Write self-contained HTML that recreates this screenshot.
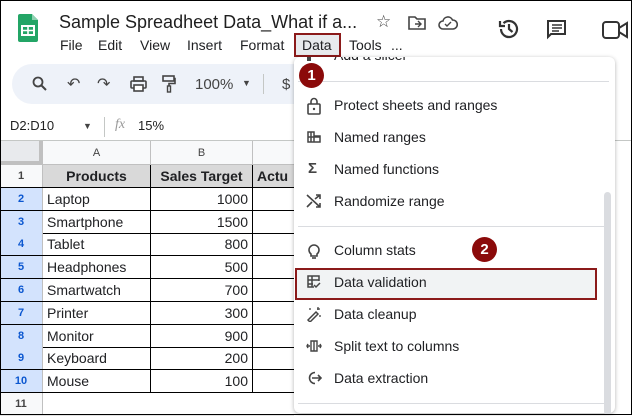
<!DOCTYPE html><html><head><style>
*{margin:0;padding:0;box-sizing:border-box}
body{width:632px;height:415px;overflow:hidden;background:#fff;font-family:"Liberation Sans",sans-serif;position:relative;color:#202124}
.a{position:absolute}
.frame{position:absolute;left:0;top:0;width:632px;height:415px;border:1px solid #000;pointer-events:none;z-index:50}
.row{position:absolute;left:0;width:294px;height:23px;border-bottom:1px solid #e2e2e2}
.rh{position:absolute;left:0;width:43px;height:100%;text-align:center;font-size:11px;font-weight:bold;line-height:22px;color:#444;background:#f8f9fa;border-right:1px solid #c0c0c0}
.c{position:absolute;height:100%;font-size:14px;line-height:22px;padding:0 4px}
.mi{position:absolute;left:294px;width:321px;height:32px;font-size:14px;line-height:32px;color:#202124}
.mi .t{position:absolute;left:40px}
.mi svg{position:absolute;left:12px;top:8px}
.badge{position:absolute;width:25px;height:25px;border-radius:50%;background:#8b0a0a;color:#fff;font-size:15px;font-weight:bold;text-align:center;line-height:25px}
</style></head><body>
<div class="frame"></div>
<svg class="a" style="left:18px;top:14px" width="20" height="28" viewBox="0 0 20 28"><path d="M0 2a2 2 0 0 1 2-2h12l6 6v20a2 2 0 0 1-2 2H2a2 2 0 0 1-2-2z" fill="#23a566"/><path d="M14 0l6 6h-6z" fill="#8ed1b1"/><rect x="4" y="12" width="12" height="9" fill="none" stroke="#fff" stroke-width="2"/><path d="M4 16.5h12M10 12v9" stroke="#fff" stroke-width="1.6"/></svg>
<div class="a" style="left:59px;top:12px;font-size:18px;color:#1f1f1f">Sample Spreadheet Data_What if a...</div>
<div class="a" style="left:376px;top:12px;font-size:17px;color:#444">☆</div>
<svg class="a" style="left:408px;top:16px" width="18" height="14" viewBox="0 0 18 14"><path d="M1 1h6l2 2h8v10H1z" fill="none" stroke="#444" stroke-width="1.6"/><path d="M7 8h6M10 5l3 3-3 3" fill="none" stroke="#444" stroke-width="1.4"/></svg>
<svg class="a" style="left:438px;top:16px" width="20" height="14" viewBox="0 0 20 14"><path d="M5 13a4 4 0 0 1 0-8 5 5 0 0 1 9.5-1A4.5 4.5 0 0 1 15 13z" fill="none" stroke="#444" stroke-width="1.6"/><path d="M7 8l2 2 4-4" fill="none" stroke="#444" stroke-width="1.4"/></svg>
<svg class="a" style="left:497px;top:17px" width="24" height="24" viewBox="0 0 24 24"><path d="M4 12a8 8 0 1 0 2.5-5.8" fill="none" stroke="#333" stroke-width="2.2"/><path d="M3 4v5h5" fill="none" stroke="#333" stroke-width="2.2"/><path d="M12 7v5l3.5 3" fill="none" stroke="#333" stroke-width="2.2"/></svg>
<svg class="a" style="left:546px;top:19px" width="22" height="22" viewBox="0 0 22 22"><path d="M2 2h17v13H5l-3 3z" fill="none" stroke="#333" stroke-width="2"/><path d="M6 6h10M6 9h10M6 12h7" stroke="#333" stroke-width="1.6"/></svg>
<svg class="a" style="left:602px;top:20px" width="30" height="20" viewBox="0 0 30 20"><rect x="1" y="2" width="16" height="16" rx="3" fill="none" stroke="#333" stroke-width="2"/><path d="M17 8l8-5v14l-8-5" fill="none" stroke="#333" stroke-width="2"/></svg>
<div class="a" style="left:60px;top:37px;font-size:14px;color:#1f1f1f">File</div>
<div class="a" style="left:98px;top:37px;font-size:14px">Edit</div>
<div class="a" style="left:140px;top:37px;font-size:14px">View</div>
<div class="a" style="left:187px;top:37px;font-size:14px">Insert</div>
<div class="a" style="left:240px;top:37px;font-size:14px">Format</div>
<div class="a" style="left:294px;top:33px;width:47px;height:24px;background:#e8eaed;border:2px solid #8b1a1a"></div>
<div class="a" style="left:302px;top:37px;font-size:14px">Data</div>
<div class="a" style="left:349px;top:37px;font-size:14px">Tools</div>
<div class="a" style="left:391px;top:37px;font-size:14px">...</div>
<div class="a" style="left:12px;top:64px;width:600px;height:40px;border-radius:20px;background:#eef2f9"></div>
<svg class="a" style="left:32px;top:76px" width="16" height="16" viewBox="0 0 16 16"><circle cx="6" cy="6" r="4.5" fill="none" stroke="#444" stroke-width="1.8"/><path d="M9.5 9.5L14 14" stroke="#444" stroke-width="2"/></svg>
<div class="a" style="left:67px;top:74px;font-size:16px;color:#444">↶</div>
<div class="a" style="left:97px;top:74px;font-size:16px;color:#444">↷</div>
<svg class="a" style="left:130px;top:76px" width="17" height="16" viewBox="0 0 17 16"><rect x="4" y="1" width="9" height="4" fill="none" stroke="#444" stroke-width="1.6"/><rect x="1" y="5" width="15" height="7" rx="1" fill="none" stroke="#444" stroke-width="1.6"/><rect x="4" y="9" width="9" height="6" fill="#fff" stroke="#444" stroke-width="1.6"/></svg>
<svg class="a" style="left:162px;top:75px" width="14" height="18" viewBox="0 0 14 18"><rect x="1" y="1" width="11" height="5" fill="none" stroke="#444" stroke-width="1.6"/><path d="M12 3.5h1v5H7v3" fill="none" stroke="#444" stroke-width="1.6"/><rect x="5.5" y="11" width="3" height="6" fill="none" stroke="#444" stroke-width="1.4"/></svg>
<div class="a" style="left:195px;top:76px;font-size:15px;color:#444">100%</div>
<div class="a" style="left:242px;top:78px;font-size:9px;color:#444">▼</div>
<div class="a" style="left:263px;top:74px;width:1px;height:20px;background:#c4c7c5"></div>
<div class="a" style="left:282px;top:76px;font-size:15px;color:#444">$</div>
<div class="a" style="left:10px;top:118px;font-size:13px;color:#222">D2:D10</div>
<div class="a" style="left:83px;top:121px;font-size:9px;color:#444">▼</div>
<div class="a" style="left:104px;top:117px;width:1px;height:20px;background:#c4c7c5"></div>
<div class="a" style="left:115px;top:117px;font-size:14px;font-style:italic;color:#999;font-family:'Liberation Serif',serif">fx</div>
<div class="a" style="left:138px;top:118px;font-size:13px;color:#222">15%</div>
<div class="a" style="left:0;top:140px;width:632px;height:1px;background:#c4c7c5"></div>
<div class="a" style="left:0;top:141px;width:294px;height:24px;background:#f8f9fa;border-bottom:1px solid #c0c0c0"></div>
<div class="a" style="left:0;top:141px;width:43px;height:24px;background:#e8eaed;border-right:4px solid #c0c0c0;border-bottom:4px solid #c0c0c0"></div>
<div class="a" style="left:43px;top:141px;width:108px;height:24px;text-align:center;font-size:11px;line-height:24px;color:#444;border-right:1px solid #c0c0c0">A</div>
<div class="a" style="left:151px;top:141px;width:102px;height:24px;text-align:center;font-size:11px;line-height:24px;color:#444;border-right:1px solid #c0c0c0">B</div>
<div id="grid"></div>
<script>
var d=[["Products","Sales Target"],["Laptop","1000"],["Smartphone","1500"],["Tablet","800"],["Headphones","500"],["Smartwatch","700"],["Printer","300"],["Monitor","900"],["Keyboard","200"],["Mouse","100"],["",""]];
var h="";
for(var i=0;i<11;i++){var y=165+i*22.8;var hd=i==0;var last=i==10;
var bc=last?"#e2e2e2":"#000";
h+='<div class="row" style="top:'+y+'px;height:23px;'+(hd?'background:#d9d9d9;':'')+'border-bottom:1px solid '+bc+'">'+
'<div class="rh" style="'+(i>=1&&i<=9?'background:#d3e3fd;color:#0b57d0;':'')+(i==0?'background:#f8f9fa;':'')+'">'+(i+1)+'</div>'+
'<div class="c" style="left:43px;width:108px;'+(last?'':'border-right:1px solid #000;')+(hd?'font-weight:bold;text-align:center;':'')+'">'+d[i][0]+'</div>'+
'<div class="c" style="left:151px;width:102px;'+(last?'':'border-right:1px solid #000;')+(hd?'font-weight:bold;text-align:center;':'text-align:right;')+'">'+d[i][1]+'</div>'+
'<div class="c" style="left:253px;width:41px;'+(hd?'font-weight:bold;':'')+'">'+(hd?'Actu':'')+'</div></div>';}
document.getElementById('grid').innerHTML=h;
</script>
<div class="a" style="left:294px;top:57px;width:321px;height:356px;background:#fff;border-radius:6px;box-shadow:0 1px 4px rgba(0,0,0,.3)"></div>
<div class="a" style="left:334px;top:57px;width:200px;height:6px;overflow:hidden"><div style="position:absolute;top:-10px;font-size:14px;line-height:16px;color:#202124">Add a slicer</div></div>
<div class="a" style="left:307px;top:57px;width:4px;height:4px;background:#444"></div>
<div class="a" style="left:298px;top:81px;width:311px;height:1px;background:#dadce0"></div>
<div class="a" style="left:298px;top:226px;width:311px;height:1px;background:#dadce0"></div>
<div class="a" style="left:298px;top:403px;width:311px;height:1px;background:#dadce0"></div>
<div class="a" style="left:604px;top:192px;width:7px;height:223px;border-radius:4px;background:#dadce0"></div>
<div class="mi" style="top:89px"><svg width="16" height="18" viewBox="0 0 16 18"><rect x="2" y="7" width="12" height="10" rx="1" fill="none" stroke="#444" stroke-width="1.6"/><path d="M5 7V4.5a3 3 0 0 1 6 0V7" fill="none" stroke="#444" stroke-width="1.6"/><circle cx="8" cy="12" r="1.2" fill="#444"/></svg><span class="t">Protect sheets and ranges</span></div>
<div class="mi" style="top:121px"><svg width="16" height="16" viewBox="0 0 16 16"><path d="M2 3h6v10H2zM8 7h6v6H8zM2 8h12M5 3v10" fill="none" stroke="#444" stroke-width="1.5"/></svg><span class="t">Named ranges</span></div>
<div class="mi" style="top:153px"><span style="position:absolute;left:14px;font-weight:bold;font-size:15px;color:#444">Σ</span><span class="t">Named functions</span><span style="position:absolute;left:548px;top:9px;width:36px;height:15px;border-radius:8px;background:#188038;color:#fff;font-size:12px;font-weight:bold;line-height:15px;text-align:center">New</span></div>
<div class="mi" style="top:185px"><svg width="16" height="16" viewBox="0 0 16 16"><path d="M1 2l13 12M1 14l5-5M9 6l5-4M10 2h4v4M10 14h4v-4" fill="none" stroke="#444" stroke-width="1.6"/></svg><span class="t">Randomize range</span></div>
<div class="mi" style="top:234px"><svg width="16" height="18" viewBox="0 0 16 18"><path d="M5 12a5 5 0 1 1 6 0v2H5z" fill="none" stroke="#444" stroke-width="1.6"/><path d="M6 16h4" stroke="#444" stroke-width="1.6"/></svg><span class="t">Column stats</span></div>
<div class="a" style="left:295px;top:268px;width:302px;height:32px;background:#f1f3f4;border:2px solid #8b1a1a"></div>
<div class="mi" style="top:266px"><svg width="16" height="16" viewBox="0 0 16 16"><path d="M8 13H2V2h11v5M2 6h11M2 10h5M6 2v11" fill="none" stroke="#444" stroke-width="1.5"/><path d="M8 11l2 2 4-4" fill="none" stroke="#444" stroke-width="1.5"/></svg><span class="t">Data validation</span></div>
<div class="mi" style="top:298px"><svg width="16" height="16" viewBox="0 0 16 16"><path d="M2 14l8-8 2 2-8 8z" fill="none" stroke="#444" stroke-width="1.5"/><path d="M12 1v3M14 3h-3M14 9v2M4 2v2" stroke="#444" stroke-width="1.3"/></svg><span class="t">Data cleanup</span><span style="position:absolute;left:557px;top:12px;width:9px;height:9px;border-radius:50%;background:#188038"></span><span style="position:absolute;left:575px;top:0;font-size:9px;color:#888">▶</span></div>
<div class="mi" style="top:330px"><svg width="16" height="16" viewBox="0 0 16 16"><path d="M5 3h6v10H5zM8 3v10M1 8h3M2 6l-1 2 1 2M12 8h3M14 6l1 2-1 2" fill="none" stroke="#444" stroke-width="1.4"/></svg><span class="t">Split text to columns</span></div>
<div class="mi" style="top:362px"><svg width="16" height="16" viewBox="0 0 16 16"><path d="M9 2.5A5.5 5.5 0 1 0 9 13.5" fill="none" stroke="#444" stroke-width="1.6"/><path d="M6 8h9M12 5l3 3-3 3" fill="none" stroke="#444" stroke-width="1.6"/></svg><span class="t">Data extraction</span></div>
<div class="badge" style="left:299px;top:63px">1</div>
<div class="badge" style="left:472px;top:237px">2</div>
</body></html>
